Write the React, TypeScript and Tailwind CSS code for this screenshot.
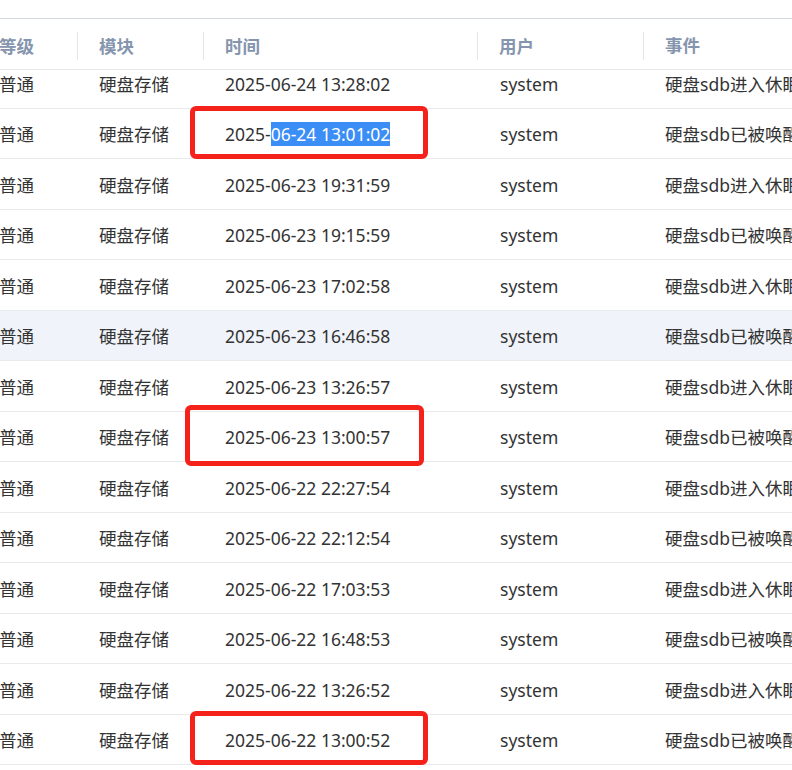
const rows = [
  ['2025-06-24 13:28:02', '硬盘sdb进入休眠'],
  ['2025-06-24 13:01:02', '硬盘sdb已被唤醒'],
  ['2025-06-23 19:31:59', '硬盘sdb进入休眠'],
  ['2025-06-23 19:15:59', '硬盘sdb已被唤醒'],
  ['2025-06-23 17:02:58', '硬盘sdb进入休眠'],
  ['2025-06-23 16:46:58', '硬盘sdb已被唤醒'],
  ['2025-06-23 13:26:57', '硬盘sdb进入休眠'],
  ['2025-06-23 13:00:57', '硬盘sdb已被唤醒'],
  ['2025-06-22 22:27:54', '硬盘sdb进入休眠'],
  ['2025-06-22 22:12:54', '硬盘sdb已被唤醒'],
  ['2025-06-22 17:03:53', '硬盘sdb进入休眠'],
  ['2025-06-22 16:48:53', '硬盘sdb已被唤醒'],
  ['2025-06-22 13:26:52', '硬盘sdb进入休眠'],
  ['2025-06-22 13:00:52', '硬盘sdb已被唤醒'],
];

const font = { fontFamily: '"Noto Sans", "Noto Sans CJK SC", sans-serif' };

function Cols({ children }: { children: React.ReactNode[] }) {
  return (
    <>
      <div className="w-[100px] -ml-[22px] pl-[21px] shrink-0 whitespace-nowrap">{children[0]}</div>
      <div className="w-[126px] pl-[21px] shrink-0 whitespace-nowrap">{children[1]}</div>
      <div className="w-[274px] pl-[21px] shrink-0 whitespace-nowrap">{children[2]}</div>
      <div className="w-[166px] pl-[22px] shrink-0 whitespace-nowrap">{children[3]}</div>
      <div className="pl-[21px] whitespace-nowrap">{children[4]}</div>
    </>
  );
}

export default function App() {
  return (
    <div className="relative w-[792px] h-[770px] overflow-hidden bg-white text-[17.5px]" style={font}>
      <div className="h-[19px] border-b border-[#d5d9e0]" />
      <div className="relative z-10 flex items-center h-[51px] pt-[3px] border-b border-[#e6e8eb] bg-white font-bold text-[#8595ad]">
        <div className="w-[100px] -ml-[22px] pl-[21px] shrink-0 border-r border-[#e3e6ea] h-[28px] leading-[28px] whitespace-nowrap">等级</div>
        <div className="w-[126px] pl-[21px] shrink-0 border-r border-[#e3e6ea] h-[28px] leading-[28px]">模块</div>
        <div className="w-[274px] pl-[21px] shrink-0 border-r border-[#e3e6ea] h-[28px] leading-[28px]">时间</div>
        <div className="w-[166px] pl-[21px] shrink-0 border-r border-[#e3e6ea] h-[28px] leading-[28px]">用户</div>
        <div className="pl-[21px]">事件</div>
      </div>
      <div className="-mt-[12px] text-[#333]">
        {rows.map(([t, e], i) => (
          <div key={i} className={`flex items-center h-[50.5px] pt-[2px] border-b border-[#e8eaed] ${i === 5 ? 'bg-[#f0f4fa]' : ''}`}>
            <Cols>
              {['普通', '硬盘存储', i === 1 ? (
                <span>2025-<span className="bg-[#3a8ef6] text-white">{t.slice(5)}</span></span>
              ) : t, 'system', e]}
            </Cols>
          </div>
        ))}
      </div>
      <div className="absolute left-[190px] top-[106px] w-[238px] h-[53px] border-[5px] border-[#f5221b] rounded-[6px]" />
      <div className="absolute left-[185px] top-[405px] w-[239px] h-[61px] border-[5px] border-[#f5221b] rounded-[6px]" />
      <div className="absolute left-[190px] top-[711px] w-[238px] h-[54px] border-[5px] border-[#f5221b] rounded-[6px]" />
    </div>
  );
}
